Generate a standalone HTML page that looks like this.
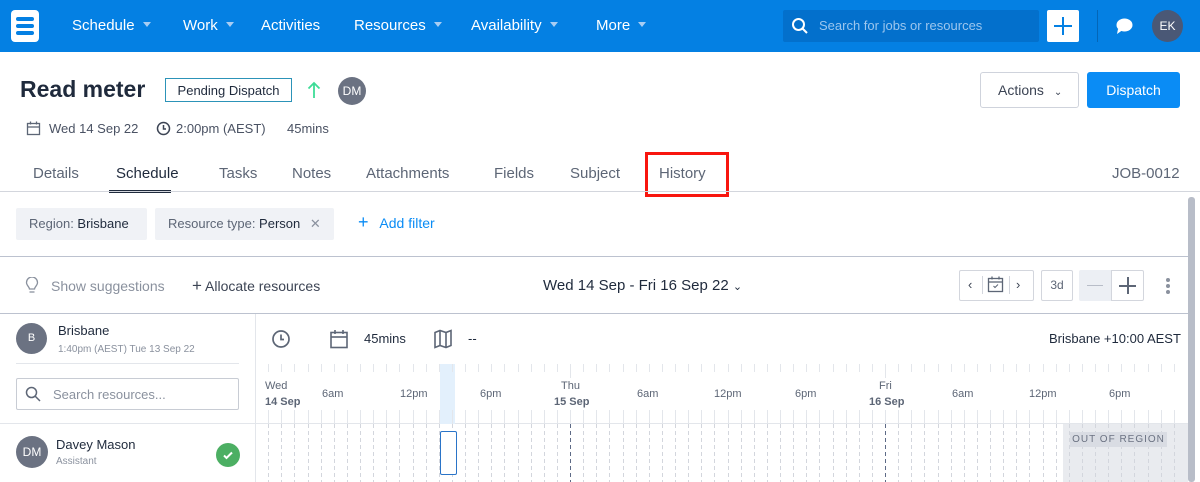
<!DOCTYPE html>
<html><head><meta charset="utf-8">
<style>
*{box-sizing:border-box;margin:0;padding:0}
body{width:1200px;height:482px;overflow:hidden;background:#fff;font-family:"Liberation Sans",sans-serif;color:#1f2a3c;position:relative}
.abs{position:absolute;white-space:nowrap}
.nav{left:0;top:0;width:1200px;height:52px;background:#0480e3}
.nav .it{position:absolute;top:17px;color:#fff;font-size:15px}
.caret{display:inline-block;width:0;height:0;border-left:4px solid transparent;border-right:4px solid transparent;border-top:5px solid #a8cdf3;margin-left:8px;vertical-align:3px}
.tab{position:absolute;top:165px;font-size:15px;color:#5d6676;white-space:nowrap}
.chip{position:absolute;top:208px;height:32px;background:#f0f2f6;border-radius:2px;font-size:13px;color:#5d6676;padding:8px 13px;white-space:nowrap}
.chip b{font-weight:normal;color:#1f2a3c}
.hl{font-size:11px;color:#5d6676;position:absolute;white-space:nowrap}
</style></head><body>
<div class="abs nav">
  <div class="abs" style="left:11px;top:10px;width:28px;height:32px;background:#fff;border-radius:4px">
    <div class="abs" style="left:5px;top:7px;width:18px;height:4px;background:#0480e3;border-radius:2px"></div>
    <div class="abs" style="left:5px;top:14px;width:18px;height:4px;background:#0480e3;border-radius:2px"></div>
    <div class="abs" style="left:5px;top:21px;width:18px;height:4px;background:#0480e3;border-radius:2px"></div>
  </div>
  <div class="it" style="left:72px">Schedule<span class="caret"></span></div>
  <div class="it" style="left:183px">Work<span class="caret"></span></div>
  <div class="it" style="left:261px">Activities</div>
  <div class="it" style="left:354px">Resources<span class="caret"></span></div>
  <div class="it" style="left:471px">Availability<span class="caret"></span></div>
  <div class="it" style="left:596px">More<span class="caret"></span></div>
  <div class="abs" style="left:783px;top:10px;width:256px;height:32px;background:#0370cc;border-radius:2px">
    <svg class="abs" style="left:8px;top:7px" width="18" height="18" viewBox="0 0 18 18"><circle cx="7.5" cy="7.5" r="5.5" fill="none" stroke="#fff" stroke-width="2"/><line x1="11.5" y1="11.5" x2="16" y2="16" stroke="#fff" stroke-width="2"/></svg>
    <div class="abs" style="left:36px;top:8px;font-size:13px;color:#9cc6ee">Search for jobs or resources</div>
  </div>
  <div class="abs" style="left:1047px;top:10px;width:32px;height:32px;background:#fff;border-radius:2px">
    <div class="abs" style="left:7px;top:15px;width:18px;height:2px;background:#0480e3"></div>
    <div class="abs" style="left:15px;top:7px;width:2px;height:18px;background:#0480e3"></div>
  </div>
  <div class="abs" style="left:1097px;top:10px;width:1px;height:32px;background:#0366b8"></div>
  <svg class="abs" style="left:1115px;top:17px" width="19" height="18" viewBox="0 0 19 18"><ellipse cx="9.5" cy="8" rx="8" ry="6.5" fill="#fff"/><path d="M3 12 L2 17 L7 13.5Z" fill="#fff"/></svg>
  <div class="abs" style="left:1152px;top:10px;width:31px;height:32px;border-radius:50%;background:#4a5876;color:#fff;font-size:12px;text-align:center;line-height:32px">EK</div>
</div>

<div class="abs" style="left:20px;top:76px;font-size:23px;font-weight:bold;color:#1f2a3c">Read meter</div>
<div class="abs" style="left:165px;top:78px;width:127px;height:24px;border:1px solid #2c93b8;font-size:13px;padding-top:4px;text-align:center">Pending Dispatch</div>
<svg class="abs" style="left:307px;top:81px" width="14" height="18" viewBox="0 0 14 18"><path d="M7 17V2M1.5 7.5L7 2l5.5 5.5" fill="none" stroke="#3ddc97" stroke-width="1.8"/></svg>
<div class="abs" style="left:338px;top:77px;width:28px;height:28px;border-radius:50%;background:#6b7282;color:#fff;font-size:12px;text-align:center;line-height:28px">DM</div>
<svg class="abs" style="left:26px;top:121px" width="15" height="15" viewBox="0 0 15 15"><rect x="1.5" y="2.5" width="12" height="11" fill="none" stroke="#5d6676" stroke-width="1.3"/><line x1="1.5" y1="6" x2="13.5" y2="6" stroke="#5d6676" stroke-width="1.3"/><line x1="4.5" y1="0.5" x2="4.5" y2="3.5" stroke="#5d6676" stroke-width="1.3"/><line x1="10.5" y1="0.5" x2="10.5" y2="3.5" stroke="#5d6676" stroke-width="1.3"/></svg>
<div class="abs" style="left:49px;top:121px;font-size:13px;color:#4a5263">Wed 14 Sep 22</div>
<svg class="abs" style="left:156px;top:121px" width="15" height="15" viewBox="0 0 15 15"><circle cx="7.5" cy="7.5" r="6" fill="none" stroke="#3c4454" stroke-width="1.5"/><path d="M7.5 4v4h2.5" fill="none" stroke="#3c4454" stroke-width="1.5"/></svg>
<div class="abs" style="left:176px;top:121px;font-size:13px;color:#4a5263">2:00pm (AEST)</div>
<div class="abs" style="left:287px;top:121px;font-size:13px;color:#4a5263">45mins</div>

<div class="abs" style="left:980px;top:72px;width:99px;height:36px;border:1px solid #cfd3dc;border-radius:3px;font-size:14px;color:#3c4454;padding:9px 0 0 17px">Actions <span style="font-size:10px;margin-left:6px">&#8964;</span></div>
<div class="abs" style="left:1087px;top:72px;width:93px;height:36px;background:#0a8cf5;border-radius:3px;color:#fff;font-size:14px;text-align:center;line-height:36px">Dispatch</div>

<div class="tab" style="left:33px">Details</div>
<div class="tab" style="left:116px;color:#1f2a3c">Schedule</div>
<div class="abs" style="left:109px;top:190px;width:62px;height:3px;background:#1f2a3c"></div>
<div class="tab" style="left:219px">Tasks</div>
<div class="tab" style="left:292px">Notes</div>
<div class="tab" style="left:366px">Attachments</div>
<div class="tab" style="left:494px">Fields</div>
<div class="tab" style="left:570px">Subject</div>
<div class="tab" style="left:659px">History</div>
<div class="abs" style="left:645px;top:152px;width:84px;height:45px;border:3px solid #f8160f"></div>
<div class="tab" style="left:1112px">JOB-0012</div>
<div class="abs" style="left:0;top:191px;width:1200px;height:1px;background:#d3d6dd"></div>

<div class="chip" style="left:16px;width:131px">Region: <b>Brisbane</b></div>
<div class="chip" style="left:155px;width:179px">Resource type: <b>Person</b> <span style="margin-left:6px;color:#8a919e">✕</span></div>
<div class="abs" style="left:358px;top:215px;font-size:14px;color:#0a8cf5"><span style="font-size:18px;line-height:14px">+</span>&nbsp;&nbsp; Add filter</div>

<div class="abs" style="left:1188px;top:197px;width:7px;height:285px;background:#b8bdc8;border-radius:3px"></div>
<div class="abs" style="left:0;top:256px;width:1188px;height:1px;background:#bcc2cf"></div>

<svg class="abs" style="left:25px;top:277px" width="14" height="18" viewBox="0 0 14 18"><path d="M4.5 12c0-2-3-3.5-3-6.5a5.5 5.5 0 0111 0c0 3-3 4.5-3 6.5z" fill="none" stroke="#8a919e" stroke-width="1.3"/><line x1="4.5" y1="15" x2="9.5" y2="15" stroke="#8a919e" stroke-width="1.3"/></svg>
<div class="abs" style="left:51px;top:278px;font-size:14px;color:#8a919e">Show suggestions</div>
<div class="abs" style="left:192px;top:278px;font-size:14px;color:#3c4454"><span style="font-size:17px;line-height:14px">+</span> Allocate resources</div>
<div class="abs" style="left:543px;top:277px;font-size:15px;color:#1f2a3c">Wed 14 Sep - Fri 16 Sep 22 <span style="font-size:11px">&#8964;</span></div>

<div class="abs" style="left:959px;top:270px;width:75px;height:31px;border:1px solid #d3d6dd;border-radius:2px"></div>
<div class="abs" style="left:968px;top:277px;font-size:13px;color:#3c4454">‹</div>
<div class="abs" style="left:982px;top:276px;width:1px;height:18px;background:#d3d6dd"></div>
<div class="abs" style="left:1009px;top:276px;width:1px;height:18px;background:#d3d6dd"></div>
<svg class="abs" style="left:987px;top:276px" width="17" height="17" viewBox="0 0 17 17"><rect x="1.5" y="2.5" width="14" height="13" fill="none" stroke="#5d6676" stroke-width="1.3"/><line x1="1.5" y1="6" x2="15.5" y2="6" stroke="#5d6676" stroke-width="1.3"/><line x1="5" y1="0.5" x2="5" y2="3.5" stroke="#5d6676" stroke-width="1.3"/><line x1="12" y1="0.5" x2="12" y2="3.5" stroke="#5d6676" stroke-width="1.3"/><path d="M6.5 10l1.5 1.5 3-3" fill="none" stroke="#5d6676"/></svg>
<div class="abs" style="left:1016px;top:277px;font-size:13px;color:#3c4454">›</div>
<div class="abs" style="left:1041px;top:270px;width:32px;height:31px;border:1px solid #d3d6dd;border-radius:2px;font-size:12px;color:#5d6676;text-align:center;line-height:29px">3d</div>
<div class="abs" style="left:1079px;top:270px;width:32px;height:31px;background:#eceff4;border-radius:2px 0 0 2px"></div>
<div class="abs" style="left:1087px;top:285px;width:16px;height:1px;background:#b8bdc8"></div>
<div class="abs" style="left:1111px;top:270px;width:33px;height:31px;border:1px solid #d3d6dd;border-radius:0 2px 2px 0"></div>
<div class="abs" style="left:1119px;top:285px;width:17px;height:1.5px;background:#5d6676"></div>
<div class="abs" style="left:1127px;top:277px;width:1.5px;height:17px;background:#5d6676"></div>
<div class="abs" style="left:1166px;top:278px;width:4px;height:4px;border-radius:50%;background:#8a919e"></div>
<div class="abs" style="left:1166px;top:284px;width:4px;height:4px;border-radius:50%;background:#8a919e"></div>
<div class="abs" style="left:1166px;top:290px;width:4px;height:4px;border-radius:50%;background:#8a919e"></div>

<div class="abs" style="left:0;top:313px;width:1188px;height:1px;background:#bcc2cf"></div>
<div class="abs" style="left:255px;top:314px;width:1px;height:168px;background:#e3e6eb"></div>

<div class="abs" style="left:16px;top:323px;width:31px;height:31px;border-radius:50%;background:#6b7282;color:#fff;font-size:11px;text-align:center;line-height:31px">B</div>
<div class="abs" style="left:58px;top:323px;font-size:13px;color:#1f2a3c">Brisbane</div>
<div class="abs" style="left:58px;top:344px;font-size:10px;color:#8a919e">1:40pm (AEST) Tue 13 Sep 22</div>
<div class="abs" style="left:16px;top:363px;width:223px;height:1px;background:#e3e6eb"></div>
<div class="abs" style="left:16px;top:378px;width:223px;height:32px;border:1px solid #c8ccd4;border-radius:2px">
  <svg class="abs" style="left:8px;top:7px" width="16" height="16" viewBox="0 0 16 16"><circle cx="6.5" cy="6.5" r="5" fill="none" stroke="#5d6676" stroke-width="1.5"/><line x1="10" y1="10" x2="15" y2="15" stroke="#5d6676" stroke-width="1.5"/></svg>
  <div class="abs" style="left:36px;top:8px;font-size:13px;color:#8a919e">Search resources...</div>
</div>
<div class="abs" style="left:0;top:423px;width:1188px;height:1px;background:#e3e6eb"></div>
<div class="abs" style="left:16px;top:436px;width:32px;height:32px;border-radius:50%;background:#6b7282;color:#fff;font-size:12px;text-align:center;line-height:32px">DM</div>
<div class="abs" style="left:56px;top:437px;font-size:13px;color:#1f2a3c">Davey Mason</div>
<div class="abs" style="left:56px;top:456px;font-size:10px;color:#8a919e">Assistant</div>
<div class="abs" style="left:216px;top:443px;width:24px;height:24px;border-radius:50%;background:#4caf63"></div>
<svg class="abs" style="left:222px;top:449px" width="12" height="12" viewBox="0 0 12 12"><path d="M2 6.5l2.5 2.5 5.5-5.5" fill="none" stroke="#fff" stroke-width="2"/></svg>

<svg class="abs" style="left:271px;top:329px" width="20" height="20" viewBox="0 0 20 20"><circle cx="10" cy="10" r="8" fill="none" stroke="#5d6676" stroke-width="1.7"/><path d="M10 5.5v5h3" fill="none" stroke="#5d6676" stroke-width="1.7"/></svg>
<svg class="abs" style="left:329px;top:329px" width="20" height="20" viewBox="0 0 20 20"><rect x="2" y="3.5" width="16" height="15" fill="none" stroke="#5d6676" stroke-width="1.6"/><line x1="2" y1="8" x2="18" y2="8" stroke="#5d6676" stroke-width="1.6"/><line x1="6" y1="1" x2="6" y2="5" stroke="#5d6676" stroke-width="1.6"/><line x1="14" y1="1" x2="14" y2="5" stroke="#5d6676" stroke-width="1.6"/></svg>
<div class="abs" style="left:364px;top:331px;font-size:13px;color:#1f2a3c">45mins</div>
<svg class="abs" style="left:433px;top:329px" width="20" height="20" viewBox="0 0 20 20"><path d="M2 3.5l5-2 6 2 5-2v15l-5 2-6-2-5 2z M7 1.5v15 M13 3.5v15" fill="none" stroke="#5d6676" stroke-width="1.6"/></svg>
<div class="abs" style="left:468px;top:331px;font-size:13px;color:#1f2a3c">--</div>
<div class="abs" style="left:1049px;top:331px;font-size:13px;color:#1f2a3c">Brisbane +10:00 AEST</div>

<div class="abs" style="left:1063px;top:424px;width:125px;height:58px;background:#e9ebef"></div>
<div class="abs" style="left:440px;top:364px;width:15px;height:60px;background:#e3f0fc"></div>
<svg id="g" class="abs" style="left:0;top:0" width="1188" height="482"></svg>
<div class="abs" style="left:1070px;top:432px;width:97px;height:15px;background:#d9dce3;font-size:10px;letter-spacing:1px;color:#6b7282;text-align:center;line-height:15px">OUT OF REGION</div>
<div class="abs" style="left:440px;top:431px;width:17px;height:44px;border:1px solid #2a74c8;border-radius:2px;background:#fff"></div>

<div class="hl" style="left:265px;top:380px">Wed</div>
<div class="hl" style="left:265px;top:396px;font-weight:bold">14 Sep</div>
<div class="hl" style="left:322px;top:388px">6am</div>
<div class="hl" style="left:400px;top:388px">12pm</div>
<div class="hl" style="left:480px;top:388px">6pm</div>
<div class="hl" style="left:561px;top:380px">Thu</div>
<div class="hl" style="left:554px;top:396px;font-weight:bold">15 Sep</div>
<div class="hl" style="left:637px;top:388px">6am</div>
<div class="hl" style="left:714px;top:388px">12pm</div>
<div class="hl" style="left:795px;top:388px">6pm</div>
<div class="hl" style="left:879px;top:380px">Fri</div>
<div class="hl" style="left:869px;top:396px;font-weight:bold">16 Sep</div>
<div class="hl" style="left:952px;top:388px">6am</div>
<div class="hl" style="left:1029px;top:388px">12pm</div>
<div class="hl" style="left:1109px;top:388px">6pm</div>

<script>
var s='',o=255,w=315/24;
for(var h=1;h<72;h++){var x=Math.round(o+h*w)+0.5;var mid=h%24==0;
 if(x>1186)break;
 var c=mid?'#5d6a86':'#d3d6dd';
 s+='<line x1="'+x+'" y1="364" x2="'+x+'" y2="'+(mid?378:372)+'" stroke="#e3e6eb"/>';
 s+='<line x1="'+x+'" y1="410" x2="'+x+'" y2="424" stroke="#e3e6eb"/>';
 s+='<line x1="'+x+'" y1="424" x2="'+x+'" y2="482" stroke="'+c+'" stroke-dasharray="4 3"/>';}
document.getElementById('g').innerHTML=s;
</script>
</body></html>
